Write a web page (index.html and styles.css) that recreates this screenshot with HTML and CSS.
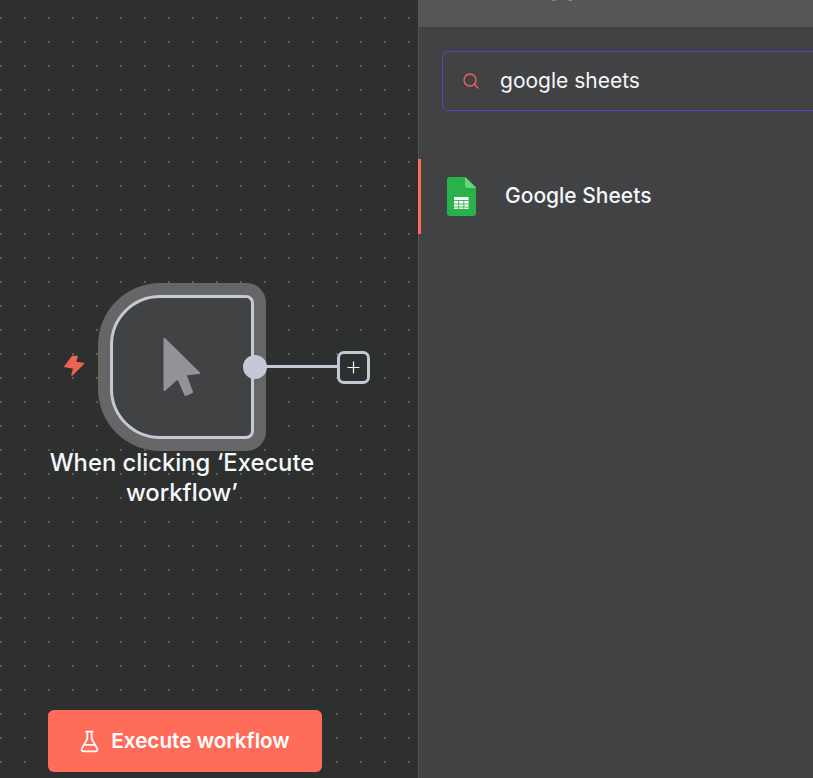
FILE: index.html
```html
<!DOCTYPE html>
<html lang="en">
<head>
<meta charset="utf-8">
<title>Workflow editor</title>
<link rel="stylesheet" href="styles.css">
</head>
<body>
<div class="app">
  <main class="canvas">
    <svg class="trigger-bolt" viewBox="0 0 22 22" aria-hidden="true"><path d="M9.500 1.500 14 1.500 12.500 7.500 20.500 8.500 9 20 11 13 2 11.500Z"/></svg>
    <div class="node">
      <svg class="node-icon" viewBox="0 0 38 60" aria-hidden="true"><path d="M1.500 2 36 36 22.500 37.500 29 55l-6.500 3L15 41 1.500 53Z"/></svg>
      <span class="port"></span>
    </div>
    <span class="connector"></span>
    <button class="add-node" type="button" aria-label="Add node">
      <svg viewBox="0 0 14 14" aria-hidden="true"><path d="M7 .5v13M.5 7h13"/></svg>
    </button>
    <div class="node-label">When clicking ‘Execute workflow’</div>
    <button class="execute" type="button">
      <svg viewBox="0 0 20 24" aria-hidden="true"><path d="M6.500 1.500h7M7.700 1.500v7.800L1.900 19.400c-.8 1.500.2 3.100 1.900 3.100h12.400c1.700 0 2.700-1.600 1.900-3.100L12.300 9.300V1.500M4.700 15.500h10.600"/></svg>
      <span class="execute-text">Execute workflow</span>
    </button>
  </main>
  <aside class="panel">
    <header class="panel-head"><span class="panel-title">What happens next?</span></header>
    <div class="search">
      <svg viewBox="0 0 16 16" aria-hidden="true"><circle cx="7" cy="7" r="6"/><path d="m11.500 11.500 3.500 3.500"/></svg>
      <span class="search-text">google sheets</span>
    </div>
    <div class="result">
      <svg class="sheets" viewBox="0 0 29 39" aria-hidden="true">
        <path class="sheet-body" d="M3 0h15.500L29 10v26a3 3 0 0 1-3 3H3a3 3 0 0 1-3-3V3a3 3 0 0 1 3-3Z"/>
        <path class="sheet-fold-light" d="M18 0l11 11h-8a3 3 0 0 1-3-3Z"/>
        <rect class="sheet-grid" x="7" y="20" width="14.500" height="12"/>
        <path class="sheet-grid-lines" d="M7 23.500h14.500M7 27h14.500M7 30h14.500M11.700 23.500V32M16.800 23.500V32"/>
      </svg>
      <span class="result-name">Google Sheets</span>
    </div>
  </aside>
</div>
</body>
</html>
```
FILE: styles.css
```css
* { box-sizing: border-box; }
html, body { margin: 0; height: 100%; overflow: hidden; }
body { font-family: Inter, "Liberation Sans", sans-serif; color: #f5f7fa; background: #2e302f; }
.app { display: flex; width: 813px; height: 778px; }

.canvas {
  position: relative;
  flex: 0 0 418px;
  background-color: #2e302f;
  background-image: radial-gradient(circle at 1px 1px, #666767 0, #5a5b5b 1px, transparent 1.4px);
  background-size: 24px 24px;
  background-position: 0 17px;
  overflow: hidden;
}
.trigger-bolt { position: absolute; left: 63px; top: 355px; width: 22px; height: 22px; fill: #ee6453; stroke: #ee6453; stroke-width: 1.500; stroke-linejoin: round; }
.node {
  position: absolute; left: 110px; top: 295px; width: 144px; height: 144px;
  display: flex; align-items: center; justify-content: center;
  background: #414244; border: 3px solid #c3c9d5;
  border-radius: 50px 8px 8px 50px;
  box-shadow: 0 0 0 12px #666;
}
.node-icon { width: 38px; height: 60px; fill: #929396; stroke: #929396; stroke-width: 2; stroke-linejoin: round; }
.port {
  position: absolute; left: 130px; top: 57px; width: 24px; height: 24px;
  border-radius: 50%; background: #c3c9d5;
}
.connector { position: absolute; left: 266px; top: 365px; width: 72px; height: 3px; background: #c3c9d5; }
.add-node {
  position: absolute; left: 337px; top: 351px; width: 33px; height: 33px; padding: 0;
  display: flex; align-items: center; justify-content: center;
  background: #2e302f; border: 3px solid #c3c9d5; border-radius: 7px;
}
.add-node svg { width: 13px; height: 13px; fill: none; stroke: #f0f1f4; stroke-width: 1.3; }
.node-label {
  position: absolute; left: 32px; top: 448px; width: 300px;
  font-size: 23.800px; line-height: 30px; font-weight: 500; text-align: center; color: #f5f7fa;
}
.execute {
  position: absolute; left: 48px; top: 710px; width: 274px; height: 62px;
  display: flex; align-items: center; justify-content: center; gap: 12px;
  padding: 0; border: 0; border-radius: 6px;
  background: #ff6d5a; color: #fff;
  font: 600 20.700px Inter, "Liberation Sans", sans-serif;
}
.execute-text { margin-bottom: 2px; }
.execute svg { width: 19px; height: 23px; fill: none; stroke: #fff; stroke-width: 1.800; stroke-linecap: round; stroke-linejoin: round; }

.panel { flex: 1; min-width: 0; background: #414244; border-left: 1px solid #535455; }
.panel-head { height: 27px; overflow: hidden; padding-left: 23px; background: #555658; }
.panel-title { display: block; margin-top: -30px; font-size: 27px; line-height: 32px; font-weight: 600; white-space: nowrap; }
.search {
  display: flex; align-items: center; gap: 21px;
  width: 420px; height: 60px; margin: 24px 0 0 23px; padding-left: 20px;
  border: 1px solid #5545c4; border-radius: 6px;
}
.search svg { flex: none; width: 16px; height: 16px; fill: none; stroke: #ee6453; stroke-width: 1.4; stroke-linecap: round; }
.search-text { font-size: 21px; line-height: 24px; color: #f5f7fa; }
.result {
  display: flex; align-items: center; gap: 29px;
  height: 75px; margin: 48px 0 0 -1px; padding-left: 26px;
  border-left: 3px solid #ff6d5a;
}
.sheets { flex: none; width: 29px; height: 39px; }
.sheet-body { fill: #2ab24a; }
.sheet-fold-light { fill: #6fd07f; }
.sheet-grid { fill: #fff; }
.sheet-grid-lines { fill: none; stroke: #2ab24a; stroke-width: .9; }
.result-name { margin-bottom: 2px; font-size: 21px; line-height: 24px; font-weight: 500; color: #f5f7fa; }
```
